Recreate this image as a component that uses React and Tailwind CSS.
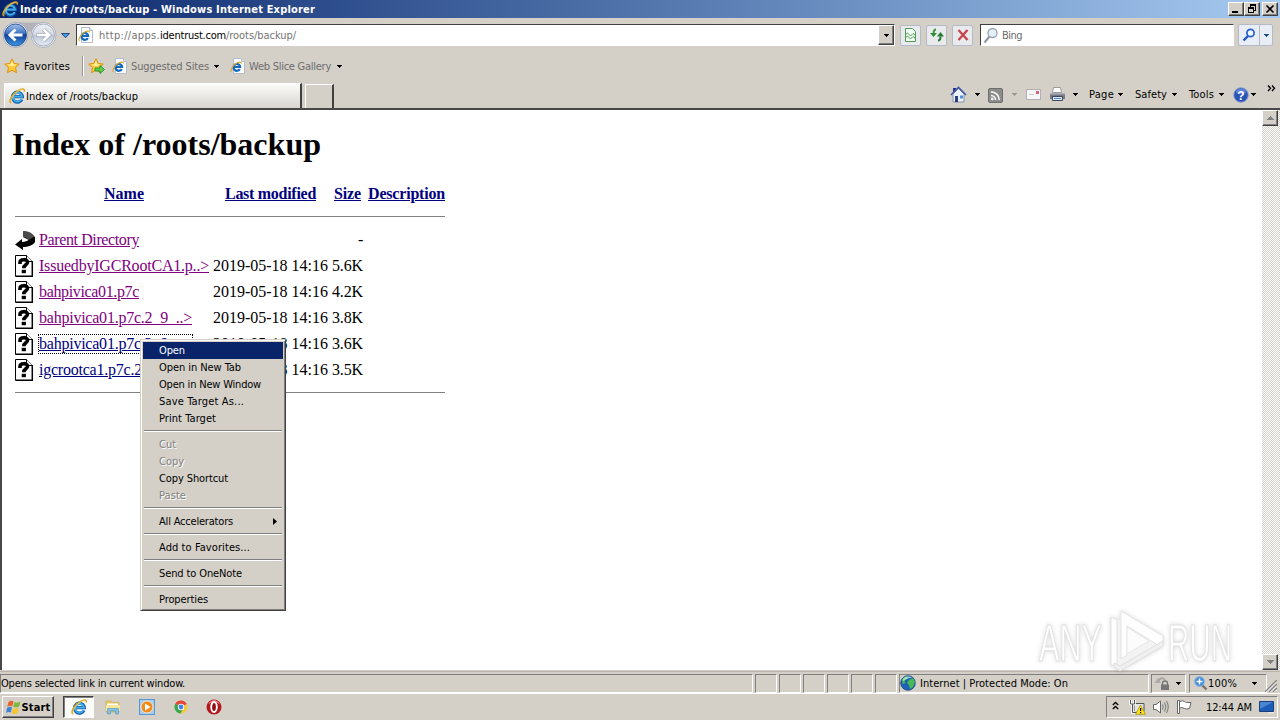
import React, { useLayoutEffect, useRef } from "react";

// Text run whose letter spacing is tuned so that it spans exactly w pixels.
// Runs sit one pixel below the row's centre unless flat is set.
function T({ w, children, flat, className = "" }) {
  const ref = useRef(null);
  useLayoutEffect(() => {
    const el = ref.current;
    el.style.letterSpacing = "0px";
    const n = el.getBoundingClientRect().width;
    el.style.letterSpacing = (w - n) / el.textContent.length + "px";
  }, [w]);
  return <span ref={ref} className={"inline-block shrink-0 whitespace-pre " + (flat ? "" : "pt-px -mb-px ") + className}>{children}</span>;
}

function IE({ s = 16, className = "" }) {
  return (
    <svg width={s} height={s} viewBox="0 0 16 16" className={"shrink-0 " + className} fill="none">
      <path d="M13 11.3A5 5 0 1 1 13.2 7.6L13.3 8.7H5" stroke="#175fae" strokeWidth="3.2" />
      <path d="M12.6 11A4.5 4.5 0 1 1 12.8 7.8L12.9 8.6H5" stroke="#42b0ea" strokeWidth="1.7" />
      <path d="M2.3 14.8C-1.5 14.4 3.5 5.6 9 2.6 12.5.6 16 0 15.2 3.6" stroke="#dca51e" strokeWidth="1.5" />
      <path d="M3 13.6C1.3 12 5 6.3 9 3.6 11 2.2 13.6 1.2 14.4 2.2" stroke="#fff1a0" strokeWidth=".6" />
    </svg>
  );
}

function PageIE({ className = "" }) {
  return (
    <svg width="16" height="16" viewBox="0 0 16 16" className={"shrink-0 " + className} fill="none">
      <path d="M3.500.5h8l3 3v12h-11z" fill="#fcfdff" stroke="#b4bccb" />
      <path d="M11.500.5v3h3" fill="#dfe7f2" stroke="#b4bccb" />
      <path d="M9.800 11.2A3.400 3.400 0 1 1 10 8L10.100 9H4.500" stroke="#1769bd" strokeWidth="2.200" />
      <path d="M1.500 14C-.5 12.800 3 7.200 6.400 5.300 8.800 3.900 11.800 3.400 11.300 5.700" stroke="#d9a928" strokeWidth="1.100" />
    </svg>
  );
}

function Down({ c = "#000", className = "" }) {
  return (
    <svg width="5" height="3" viewBox="0 0 5 3" className={"shrink-0 " + className} shapeRendering="crispEdges">
      <path d="M0 0h5v1H4v1H3v1H2V2H1V1H0z" fill={c} />
    </svg>
  );
}

function Star({ className = "", arrow }) {
  return (
    <svg width="17" height="16" viewBox="0 0 17 16" className={"shrink-0 " + className}>
      <path d="M8 .8l2.200 4.700 5.100.6-3.800 3.500 1 5.100L8 12.200l-4.500 2.500 1-5.100L.7 6.100l5.100-.6z" fill="#fcc93c" stroke="#dc9310" strokeWidth="1" />
      <path d="M8 2.800l1.500 3.500 3.400.4-5 1.500-5-1.500 3.500-.4z" fill="#fff09b" />
      {arrow && <path d="M7 10h5V7.500l4.500 4-4.500 4V13H7z" fill="#62cf4e" stroke="#24902a" strokeWidth=".9" />}
    </svg>
  );
}

function NavButtons() {
  return (
    <svg width="72" height="30" viewBox="0 0 72 30" className="shrink-0">
      <defs>
        <linearGradient id="bk" x1="0" y1="0" x2="0" y2="1">
          <stop offset="0" stopColor="#a4c2ea" />
          <stop offset=".42" stopColor="#3f74c4" />
          <stop offset=".5" stopColor="#123f96" />
          <stop offset="1" stopColor="#3d9be6" />
        </linearGradient>
        <linearGradient id="fw" x1="0" y1="0" x2="0" y2="1">
          <stop offset="0" stopColor="#eef1f6" />
          <stop offset=".48" stopColor="#d5dae5" />
          <stop offset=".52" stopColor="#bcc5d6" />
          <stop offset="1" stopColor="#e8edf5" />
        </linearGradient>
      </defs>
      <path d="M14 2.500h29v5q-6 0-9 4h-11q-3-4-9-4z" fill="#b3b2b8" />
      <circle cx="14.500" cy="15" r="12.500" fill="#f2f4f8" stroke="#8c98ae" strokeWidth=".8" />
      <circle cx="42.500" cy="15" r="12.500" fill="#f2f4f8" stroke="#9da4b4" strokeWidth=".8" />
      <circle cx="14.500" cy="15" r="11" fill="url(#bk)" stroke="#193f82" strokeWidth=".8" />
      <circle cx="42.500" cy="15" r="11" fill="url(#fw)" stroke="#949cb0" strokeWidth=".8" />
      <path d="M21.500 15H9.500M14.500 9.500L8.800 15l5.700 5.500" fill="none" stroke="#fff" strokeWidth="2.800" />
      <path d="M35.500 15h12M42.500 9.500l5.700 5.500-5.700 5.500" fill="none" stroke="#9fa5b2" strokeWidth="4" />
      <path d="M36 15h11.500M42.500 9.500l5.700 5.500-5.700 5.500" fill="none" stroke="#fff" strokeWidth="2.600" />
      <path d="M60.500 13.500h8L64.500 17.700z" fill="#3f9ae6" stroke="#1b4178" strokeWidth=".9" />
    </svg>
  );
}

const raised = "border border-t-white border-l-white border-r-[#404040] border-b-[#404040] bg-[#d4d0c8] shadow-[inset_-1px_-1px_0_#808080] flex items-center justify-center shrink-0";
const sunk = "border border-t-[#808080] border-l-[#808080] border-r-white border-b-white shrink-0";
const tool = "w-[21px] h-[21px] border border-[#b4bac6] bg-[#e9eaee] rounded-[2px] flex items-center justify-center shrink-0";

function TitleBar() {
  return (
    <div className="h-[18px] flex items-center pl-[2px] pr-[2px] bg-linear-to-r from-[#0a246a] to-[#a6caf0] text-white font-bold">
      <IE s={16} />
      <T w={295} className="ml-[2px]">Index of /roots/backup - Windows Internet Explorer</T>
      <div className="ml-auto flex text-black">
        <div className={raised + " w-4 h-[14px]"}>
          <svg width="12" height="10" shapeRendering="crispEdges"><path d="M2 7h6v2H2z" /></svg>
        </div>
        <div className={raised + " w-4 h-[14px]"}>
          <svg width="12" height="10" shapeRendering="crispEdges">
            <path d="M4 0h6v7H8V6h1V2H5v1H4zM2 3h6v6H2zM3 5v3h4V5z" fillRule="evenodd" />
          </svg>
        </div>
        <div className={raised + " w-4 h-[14px] ml-[2px]"}>
          <svg width="12" height="10"><path d="M2.500 1.500l7 7m0-7l-7 7" stroke="#000" strokeWidth="1.600" /></svg>
        </div>
      </div>
    </div>
  );
}

function AddressRow() {
  return (
    <div className="h-8 flex items-center pl-px pt-[2px]">
      <NavButtons />
      <div className="ml-[3px] w-[819px] h-[22px] border border-[#404040] border-b-white border-r-white bg-white flex items-center text-[#747474]">
        <PageIE className="ml-px" />
        <T w={61} className="ml-[5px]">http://apps.</T>
        <T w={66} className="text-black">identrust.com</T>
        <T w={70}>/roots/backup/</T>
        <div className={raised + " w-4 h-[20px] ml-auto"}><Down /></div>
      </div>
      <div className={tool + " ml-[5px]"}>
        <svg width="15" height="16" viewBox="0 0 15 16" fill="none">
          <path d="M2.500 1.500h7l3 3v10h-10z" fill="#f4fbf4" stroke="#4f9c58" />
          <path d="M2 8l2.500-2 3 3 2.500-2.500 3 2.500M2 11l2.500-2 3 3 2.500-2.500 3 2.500" stroke="#47a04c" strokeWidth="1" />
        </svg>
      </div>
      <div className={tool + " ml-[5px]"}>
        <svg width="16" height="16" viewBox="0 0 16 16" fill="none">
          <path d="M7 2.500C5 2.500 4.500 4 4.500 7" stroke="#3c9a3c" strokeWidth="2" />
          <path d="M1 6h7L4.500 10z" fill="#2f8f35" />
          <path d="M9 13.500c2 0 2.500-1.500 2.500-4" stroke="#237a2b" strokeWidth="2" />
          <path d="M8 9.500h7L11.500 5z" fill="#1f7c2a" />
        </svg>
      </div>
      <div className={tool + " ml-[5px]"}>
        <svg width="14" height="14" viewBox="0 0 14 14"><path d="M2.500 2l9 10M11.500 2l-9 10" stroke="#c9424a" strokeWidth="2.300" /></svg>
      </div>
      <div className="ml-[7px] w-[254px] h-[22px] border border-[#404040] border-b-white border-r-white bg-white flex items-center text-[#6d6d6d]">
        <svg width="16" height="17" viewBox="0 0 16 17" className="ml-[2px]" fill="none">
          <path d="M6.500 9.500L1.500 15.500" stroke="#8d95a0" strokeWidth="2" />
          <circle cx="9.500" cy="6" r="4.500" fill="#e2f0fa" stroke="#98a3b1" strokeWidth="1.300" />
        </svg>
        <T w={20} className="ml-[3px]">Bing</T>
      </div>
      <div className="ml-[4px] flex h-[22px] w-[35px] rounded-[2px] border border-[#b4bac6] bg-[#e9edf5]">
        <div className="flex w-[21px] items-center justify-center border-r border-[#b4bac6]">
          <svg width="14" height="14" viewBox="0 0 14 14" fill="none">
            <path d="M6 8L1.500 12.500" stroke="#2255c4" strokeWidth="2.400" />
            <circle cx="8.500" cy="5" r="3.600" fill="#f4f9ff" stroke="#2a63d4" strokeWidth="1.800" />
          </svg>
        </div>
        <div className="flex grow items-center justify-center"><Down c="#1e4f94" /></div>
      </div>
    </div>
  );
}

function FavoritesRow() {
  return (
    <div className="h-[31px] flex items-center pl-1 text-[#6d6d6d] pt-px">
      <Star />
      <T w={46} className="ml-[3px] text-black">Favorites</T>
      <div className="ml-[12px] w-px h-5 bg-[#9a978f] shadow-[1px_0_0_#fff]" />
      <Star arrow className="ml-[5px]" />
      <PageIE className="ml-[7px]" />
      <T w={78} className="ml-[3px]">Suggested Sites</T>
      <Down className="ml-[5px]" />
      <PageIE className="ml-[11px]" />
      <T w={82} className="ml-[3px]">Web Slice Gallery</T>
      <Down className="ml-[6px]" />
    </div>
  );
}

function TabRow() {
  return (
    <div className="h-[27px] flex items-start">
      <div className="ml-1 mt-[2px] h-[25px] w-[298px] flex items-center border-l border-t border-white border-r-2 border-r-[#404040] bg-linear-to-b from-[#fbfbfa] to-[#d9d6cf] pl-1">
        <IE s={16} />
        <T w={112} className="ml-px">Index of /roots/backup</T>
      </div>
      <div className="ml-[3px] mt-[3px] h-6 w-[29px] border-t border-l border-white border-r-2 border-r-[#404040]" />
      <div className="ml-auto flex h-[27px] items-center pr-[4px]">
        <svg width="17" height="17" viewBox="0 0 17 17">
          <path d="M3 2h3v4H3z" fill="#27358c" />
          <path d="M3 8l5.500-5.500L14 8v8H3z" fill="#edf1fa" stroke="#7580a8" strokeWidth=".8" />
          <path d="M1 9l7.500-7.500L16 9" fill="none" stroke="#4357a4" strokeWidth="1.600" />
          <path d="M5 10h3v6H5z" fill="#27417e" /><path d="M10 9.500h3v3h-3z" fill="#4d94d8" />
        </svg>
        <Down className="ml-[8px]" />
        <svg width="15" height="15" viewBox="0 0 15 15" fill="none" className="ml-2 mt-px">
          <rect x=".5" y=".5" width="14" height="14" rx="1.500" fill="#8c8c8c" stroke="#6e6e6e" />
          <path d="M3 7.500a4.500 4.500 0 0 1 4.500 4.500M3 3.800A8.200 8.200 0 0 1 11.200 12" stroke="#f4f4f4" strokeWidth="1.700" />
          <circle cx="4.200" cy="10.900" r="1.400" fill="#f4f4f4" />
        </svg>
        <Down c="#9b978f" className="ml-[9px]" />
        <svg width="15" height="11" viewBox="0 0 15 11" className="ml-[9px]">
          <rect x=".5" y=".5" width="14" height="10" fill="#f8f7f8" stroke="#b4aeb6" />
          <path d="M3 5h5v1H3z" fill="#c9c9d2" /><path d="M10 2h3v3h-3z" fill="#d5607a" />
        </svg>
        <svg width="17" height="16" viewBox="0 0 17 16" className="ml-[8px]">
          <path d="M4.500.500h7l1 5h-9z" fill="#fff" stroke="#9b9b9b" />
          <path d="M1 6h15v6H1z" fill="#767b86" /><path d="M1 6h15v1.500H1z" fill="#a8adb7" />
          <path d="M3.500 9.500h10v4h-10z" fill="#dce9f7" stroke="#414754" />
          <path d="M5 11h7v1H5z" fill="#4e8ed6" />
        </svg>
        <Down className="ml-[7px]" />
        <T flat w={25} className="ml-[11px]">Page</T>
        <Down className="ml-[4px]" />
        <T flat w={32} className="ml-[12px]">Safety</T>
        <Down className="ml-[5px]" />
        <T flat w={25} className="ml-[12px]">Tools</T>
        <Down className="ml-[5px]" />
        <svg width="16" height="16" viewBox="0 0 16 16" className="ml-[9px]">
          <circle cx="8" cy="8" r="7.300" fill="#2a53b6" stroke="#8da0cc" />
          <ellipse cx="8" cy="4.500" rx="5" ry="3" fill="#7ba0e6" opacity=".6" />
          <text x="8" y="12.500" textAnchor="middle" fontSize="12" fontWeight="bold" fill="#fff" fontFamily="Liberation Sans, sans-serif">?</text>
        </svg>
        <Down className="ml-[2px]" />
        <svg width="9" height="7" viewBox="0 0 9 7" fill="none" className="ml-[11px] mb-3">
          <path d="M1 .500L3.500 3.300 1 6M5 .500l2.500 2.800L5 6" stroke="#000" strokeWidth="1.400" />
        </svg>
      </div>
    </div>
  );
}

function BackIcon() {
  return (
    <svg width="20" height="20" viewBox="0 0 20 20">
      <path d="M8 1l12 6v5c-2 3.500-7 5-12 5v3L0 14.500 7 9v3c3-.2 5.500-.8 6.500-2.200L8 7z" fill="#000" />
      <path d="M8 1c5 0 9 1.500 11.500 5.500L13.500 10C12 8 10.500 7.200 8 7z" fill="#4c4c4c" />
    </svg>
  );
}

function UnknownIcon() {
  return (
    <svg width="20" height="22" viewBox="0 0 20 22">
      <path d="M.5.5h11l6 6v15H.5z" fill="#fff" stroke="#000" />
      <path d="M11.500.500v6h6" fill="#fff" stroke="#000" />
      <path d="M17.300 6.500v14.800H1" fill="none" stroke="#000" strokeWidth="1.500" />
      <path d="M5 9V7.400c0-3.600 7.500-3.600 7.500-.2 0 2.800-3.700 2.300-3.700 6" fill="none" stroke="#000" strokeWidth="3.600" />
      <path d="M6.700 14.800h4.200v3.400H6.700z" />
    </svg>
  );
}

const rows = [
  { n: "IssuedbyIGCRootCA1.p..>", w: 170, s: "5.6K", c: "text-[#800080]" },
  { n: "bahpivica01.p7c", w: 100, s: "4.2K", c: "text-[#800080]" },
  { n: "bahpivica01.p7c.2_9_..>", w: 153, s: "3.8K", c: "text-[#800080]" },
  { n: "bahpivica01.p7c.3_9_..>", w: 153, s: "3.6K", c: "text-[#000080]", focus: true },
  { n: "igcrootca1.p7c.2", w: 103, s: "3.5K", c: "text-[#000080]" },
];

function Listing() {
  return (
    <div className="grow pl-[10px] text-black font-['Liberation_Serif',serif] text-base leading-[18px]">
      <h1 className="mt-[16px] h-9 leading-9 text-[32px] font-bold"><T flat w={309}>Index of /roots/backup</T></h1>
      <div className="ml-[3px] w-[430px] mt-[23px]">
        <div className="flex h-[18px] font-bold text-[#000080]">
          <T flat w={40} className="ml-[89px] underline">Name</T>
          <T flat w={91} className="ml-[81px] underline">Last modified</T>
          <T flat w={27} className="ml-[18px] underline">Size</T>
          <T flat w={77} className="ml-[7px] underline">Description</T>
        </div>
        <div className="mt-[13px] h-px bg-[#808080]" />
        <div className="mt-[10px] flex h-[26px] items-center">
          <BackIcon />
          <T flat w={100} className="ml-1 text-[#800080] underline">Parent Directory</T>
          <span className="ml-[219px]">-</span>
        </div>
        {rows.map((r, i) => (
          <div key={i} className="flex h-[26px] items-center">
            <UnknownIcon />
            <div className="ml-1 w-[174px] shrink-0 flex items-center">
              <T flat w={r.w} className={(r.focus ? "outline-1 outline-dotted outline-black " : "") + "underline " + r.c}>{r.n}</T>
            </div>
            <T flat w={115}>2019-05-18 14:16</T>
            <T flat w={31} className="ml-1">{r.s}</T>
          </div>
        ))}
        <div className="mt-[9px] h-px bg-[#808080]" />
      </div>
    </div>
  );
}

const menu = [
  ["Open", 26, "sel"], ["Open in New Tab", 82], ["Open in New Window", 102], ["Save Target As...", 85], ["Print Target", 57], null,
  ["Cut", 17, "off"], ["Copy", 25, "off"], ["Copy Shortcut", 69], ["Paste", 27, "off"], null,
  ["All Accelerators", 74, "sub"], null, ["Add to Favorites...", 91], null, ["Send to OneNote", 83], null, ["Properties", 49],
];

function ContextMenu() {
  return (
    <div className="absolute left-[140px] top-[339px] w-[146px] h-[272px] border border-[#d4d0c8] border-r-[#404040] border-b-[#404040] bg-[#d4d0c8] p-[2px] shadow-[inset_1px_1px_0_#fff,inset_-1px_-1px_0_#808080]">
      {menu.map((m, i) =>
        m ? (
          <div key={i} className={"flex h-[17px] items-center pl-4 " + (m[2] === "sel" ? "bg-[#0a246a] text-white" : m[2] === "off" ? "text-[#808080] [text-shadow:1px_1px_0_#fff]" : "text-black")}>
            <T flat w={m[1]}>{m[0]}</T>
            {m[2] === "sub" && <svg width="4" height="7" className="ml-auto mr-[6px]"><path d="M0 0l4 3.500L0 7z" /></svg>}
          </div>
        ) : (
          <div key={i} className="flex h-[9px] flex-col px-px pt-[3px]">
            <div className="h-px bg-[#808080]" />
            <div className="h-px bg-white" />
          </div>
        )
      )}
    </div>
  );
}

function Watermark() {
  return (
    <svg width="204" height="70" viewBox="0 0 204 70" className="absolute left-[1034px] top-[604px] [filter:drop-shadow(0_0_2px_rgba(0,0,0,.16))]">
      <g fontFamily="Liberation Sans, sans-serif" fontSize="52" fill="#fff" stroke="#e0e0e0" strokeWidth="1">
        <text x="5" y="57" textLength="63" lengthAdjust="spacingAndGlyphs">ANY</text>
        <text x="134" y="57" textLength="64" lengthAdjust="spacingAndGlyphs">RUN</text>
      </g>
      <path d="M86 8l43 25v8L86 67l-9-5V13l9 3z" fill="#f3f3f3" />
      <path d="M77 13l6 3v43l-6 3z" fill="#fff" stroke="#e2e2e2" />
      <path d="M87 7l42 25v6l-5 3-31-19v29l-6 4z" fill="#fff" stroke="#e2e2e2" />
      <path d="M93 23v27l22-13z" fill="#fcfcfc" stroke="#e8e8e8" />
      <path d="M80 59l6 3 43-25v5L86 67l-6-4z" fill="#f0f0f0" stroke="#dedede" />
    </svg>
  );
}

const track = "bg-[repeating-conic-gradient(#d4d0c8_0_25%,#fff_0_50%)] bg-[length:2px_2px]";

function Content() {
  return (
    <div className="h-[562px] flex border-t-2 border-l-2 border-t-[#484848] border-l-[#484848] bg-white">
      <Listing />
      <div className={"flex w-[18px] flex-col items-center justify-between pr-[2px] " + track}>
        <div className={raised + " w-4 h-4"}>
          <svg width="7" height="4" shapeRendering="crispEdges"><path d="M0 4h7L3.500 0z" fill="#808080" /></svg>
        </div>
        <div className={raised + " w-4 h-4"}>
          <svg width="7" height="4" shapeRendering="crispEdges"><path d="M0 0h7L3.500 4z" fill="#808080" /></svg>
        </div>
      </div>
    </div>
  );
}

function StatusBar() {
  return (
    <div className="flex h-[23px] items-center gap-[2px] border-t border-b border-t-[#b9b5ad] border-b-white pt-px">
      <div className={sunk + " flex h-[19px] w-[753px] items-center"}><T w={184}>Opens selected link in current window.</T></div>
      {[0, 1, 2, 3, 4, 5].map((i) => <div key={i} className={sunk + " h-[19px] w-[22px]"} />)}
      <div className={sunk + " flex h-[19px] w-[250px] items-center"}>
        <svg width="16" height="16" viewBox="0 0 16 16">
          <circle cx="8" cy="8" r="7.300" fill="#1d62b8" stroke="#1a4780" strokeWidth=".8" />
          <path d="M2 4.500C4 1.500 7 .8 8.500 1.500L7 4 4.500 6l1 2-3 1zM9 5l4-2 2 4-2 5-3 2-1-4-2-2z" fill="#49ba53" />
          <path d="M3 4c2-3 7-3 9-1-3 0-5 .5-9 3z" fill="#cbeef8" opacity=".7" />
        </svg>
        <T w={148} className="ml-1">Internet | Protected Mode: On</T>
      </div>
      <div className={sunk + " flex h-[19px] w-[35px] items-center"}>
        <svg width="16" height="16" viewBox="0 0 16 16" className="ml-[2px]" fill="none">
          <path d="M0 8h7L4 3z" fill="#b5b3af" /><path d="M4 8c0-5 5-6 7-3" stroke="#aaa8a4" strokeWidth="2" />
          <path d="M8.500 10V8.500a2.500 2.500 0 0 1 5 0V10" stroke="#777" strokeWidth="1.300" />
          <path d="M7 9.500h8v5.500H7z" fill="#777" />
        </svg>
        <Down className="ml-[6px]" />
      </div>
      <div className={sunk + " ml-px flex h-[19px] w-[78px] items-center"}>
        <svg width="14" height="15" viewBox="0 0 14 15" fill="none" className="ml-[4px]">
          <path d="M8 9l4.500 4.500" stroke="#77716c" strokeWidth="2.400" />
          <circle cx="5.500" cy="5.500" r="4.800" fill="#3c8de4" stroke="#8baed6" />
          <path d="M5.500 2.500v6M2.500 5.500h6" stroke="#fff" strokeWidth="1.500" />
        </svg>
        <T w={29}>100%</T>
        <Down className="ml-[15px]" />
      </div>
      <svg width="12" height="12" viewBox="0 0 12 12" className="-ml-1 mt-[6px] shrink-0">
        <path d="M0 12L12 0M4 12l8-8M8 12l4-4" stroke="#808080" strokeWidth="1.400" />
        <path d="M1.500 12L12 1.500M5.500 12L12 5.500M9.500 12L12 9.500" stroke="#fff" strokeWidth=".8" />
      </svg>
    </div>
  );
}

function Taskbar() {
  return (
    <div className="flex h-[27px] items-center pl-[2px] pr-[2px] pb-px">
      <div className={raised + " h-[22px] w-[52px] font-bold"}>
        <svg width="16" height="15" viewBox="0 0 16 15">
          <path d="M2.500 2Q5 0 7.500 1.500L6.300 6.500Q4 5 1.200 7z" fill="#e9622b" />
          <path d="M8.500 2Q11 3.500 14.500 1.500L13.200 6.500Q10 8.500 7.300 6.800z" fill="#7fb93c" />
          <path d="M1 8Q4 6 6 7.500L4.800 12.500Q2.500 11.500 0 13z" fill="#3f83d8" />
          <path d="M7 8Q10 9.500 13 7.800L11.600 13Q8.500 15 5.800 13.200z" fill="#f8c52d" />
        </svg>
        <T w={29}>Start</T>
      </div>
      <div className="ml-[9px] flex h-[22px] w-[31px] shrink-0 items-center justify-center border border-t-[#404040] border-l-[#404040] border-r-white border-b-white bg-[#fbfbfa] shadow-[inset_1px_1px_0_#808080]"><IE s={16} /></div>
      <svg width="16" height="16" viewBox="0 0 16 16" className="ml-[11px]">
        <path d="M1 2h5l1.500 1.500H14V13H1z" fill="#e8c964" stroke="#c8a545" strokeWidth=".6" />
        <path d="M2 4.500h11V7H2z" fill="#fff" /><path d="M1 6h14v6H1z" fill="#f7e59b" />
        <path d="M2.500 15V9.500h11V15h-3v-3h-5v3z" fill="#7fc1ea" stroke="#4e93c4" strokeWidth=".6" />
      </svg>
      <svg width="16" height="16" viewBox="0 0 16 16" className="ml-[18px]">
        <rect x=".5" y=".5" width="15" height="15" fill="#a7cdf1" stroke="#5797d1" />
        <circle cx="8" cy="8" r="6" fill="#f28a1c" stroke="#fff1da" strokeWidth=".8" /><path d="M6 4.500L11.500 8 6 11.500z" fill="#fff" />
      </svg>
      <svg width="14" height="14" viewBox="0 0 14 14" className="ml-[19px]">
        <circle cx="7" cy="7" r="6.500" fill="#f6c935" />
        <path d="M7 7L1.300 3.800A6.500 6.500 0 0 1 12.700 4z" fill="#e2473a" />
        <path d="M7 7L1.300 3.800A6.500 6.500 0 0 0 6.500 13.500L9 9z" fill="#38a553" />
        <circle cx="7" cy="7" r="3.200" fill="#fff" /><circle cx="7" cy="7" r="2.400" fill="#4285e8" />
      </svg>
      <svg width="16" height="16" viewBox="0 0 16 16" className="ml-[18px]">
        <circle cx="8" cy="8" r="7.500" fill="#b5161c" /><path d="M2 5Q8-3 14 5 8 2 2 5" fill="#e57777" />
        <ellipse cx="8" cy="8" rx="2.800" ry="5" fill="#8f0b10" stroke="#fff" strokeWidth="1.900" />
      </svg>
      <div className={sunk + " ml-auto flex h-[22px] w-[172px] items-center"}>
        <svg width="7" height="9" viewBox="0 0 7 9" fill="none" className="ml-[5px] mb-[3px]">
          <path d="M.8 4L3.500 1.500 6.200 4M.8 8L3.500 5.500 6.200 8" stroke="#000" strokeWidth="1.300" />
        </svg>
        <svg width="17" height="16" viewBox="0 0 17 16" className="ml-[10px]">
          <path d="M5 4.500h10v8H5z" fill="#e4e4e4" stroke="#555" /><path d="M1.500 1v4h4V1M3.500 5v8.500H8" fill="none" stroke="#fff" strokeWidth="2.500" />
          <path d="M1.500 1v4h4V1M3.500 5v8.500H8" fill="none" stroke="#555" />
          <path d="M11.500 6L16.500 15.300h-10z" fill="#ffe21c" stroke="#9f890d" strokeWidth=".7" /><path d="M11 9h1.200v3H11zM11 13h1.200v1.200H11z" />
        </svg>
        <svg width="18" height="16" viewBox="0 0 18 16" fill="none" className="ml-[6px]">
          <path d="M1.500 5.500H4L8.500 2v12L4 10.500H1.500z" fill="#fff" stroke="#666" />
          <path d="M10.500 5.500q1.500 2.500 0 5M12.500 3.500q3 4.500 0 9M14.500 2q3.500 6 0 12" stroke="#777" />
        </svg>
        <svg width="17" height="16" viewBox="0 0 17 16" className="ml-[6px]">
          <path d="M3.500 2.500q3-1.500 5 0 1 1 2 1h4.500l-1.500 6q-3 1-5 0-2-1.500-5-.500z" fill="#fff" stroke="#666" />
          <path d="M1.500 1.500h2v13h-2z" fill="#fff" stroke="#666" />
        </svg>
        <T w={46} className="ml-[13px]">12:44 AM</T>
        <svg width="16" height="14" viewBox="0 0 16 14" className="ml-[7px]">
          <path d="M.5 1.500h14v10H.5z" fill="#1c5cb9" stroke="#173f7c" /><path d="M1 2h13L1 9z" fill="#639be0" opacity=".65" />
          <path d="M9 12h6v1.500H9z" fill="#e8e8e8" />
        </svg>
      </div>
    </div>
  );
}

export default function App() {
  return (
    <div className="relative h-[720px] w-[1280px] overflow-hidden bg-[#d4d0c8] text-[11px] leading-[14px] text-black font-['DejaVu_Sans_Condensed','DejaVu_Sans',sans-serif]">
      <TitleBar />
      <AddressRow />
      <FavoritesRow />
      <TabRow />
      <Content />
      <div className="h-px" />
      <StatusBar />
      <Taskbar />
      <ContextMenu />
      <Watermark />
    </div>
  );
}
